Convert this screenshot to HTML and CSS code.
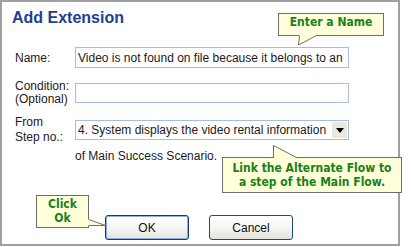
FILE: index.html
```html
<!DOCTYPE html>
<html lang="en">
<head>
    <meta charset="UTF-8">
    <title>Add Extension</title>
    <link rel="stylesheet" href="styles.css">
</head>
<body>
<div class="screen">

    <!-- Dialog -->
    <div class="dialog">
        <h1 class="title">Add Extension</h1>

        <div class="row row-name">
            <label class="label" for="name">Name:</label>
            <input class="field field-name" type="text" id="name" value="Video is not found on file because it belongs to an">
        </div>

        <div class="row row-cond">
            <label class="label label-cond" for="condition">Condition:<br>(Optional)</label>
            <input class="field field-cond" type="text" id="condition">
        </div>

        <div class="row row-step">
            <label class="label label-step">From<br>Step no.:</label>
            <div class="select">
                <span class="select-text">4. System displays the video rental information</span>
                <span class="select-btn"><span class="arrow"></span></span>
            </div>
        </div>

        <p class="note">of Main Success Scenario.</p>

        <div class="buttons">
            <button class="btn btn-default">OK</button>
            <button class="btn">Cancel</button>
        </div>
    </div>

    <!-- Callouts -->
    <div class="callout callout-name">Enter a Name</div>
    <div class="callout callout-flow">Link the Alternate Flow to<br>a step of the Main Flow.</div>
    <div class="callout callout-ok">Click<br>Ok</div>

    <svg class="tails" width="413" height="247" viewBox="0 0 413 247">
        <polygon points="299,35 317,35 298,45.5" fill="#ffffd9"/>
        <polyline points="299.5,35.5 298.5,45 316.5,35.5" fill="none" stroke="#6e6e6e"/>
        <polygon points="274,158 273,145 297,158" fill="#ffffd9"/>
        <polyline points="273.5,157.5 273.5,145.5 296.5,157.5" fill="none" stroke="#6e6e6e"/>
        <polygon points="88,219 106,225.5 88,226" fill="#ffffd9"/>
        <polyline points="88.5,219.5 105.5,225.5 88.5,225.5" fill="none" stroke="#6e6e6e"/>
    </svg>
</div>
</body>
</html>
```

FILE: styles.css
```css
body {
    margin: 0;
    font-family: "Liberation Sans", Arial, sans-serif;
    font-size: 12px;
    color: #1a1a1a;
    background: #fff;
}

.screen {
    position: relative;
    width: 413px;
    height: 247px;
}

.dialog {
    width: 400px;
    height: 246px;
    box-sizing: border-box;
    border: 2px solid #a0a0a0;
    padding: 6px 15px 0 13px;
}

.title {
    margin: 0 0 0 -3px;
    font-size: 16px;
    line-height: 20px;
    font-weight: bold;
    color: #1d3d96;
}

.row {
    display: flex;
    align-items: center;
}

.label {
    flex: none;
    width: 60px;
    line-height: 14px;
}

.label-cond {
    line-height: 13px;
}

.label-step {
    line-height: 15px;
}

.row-name {
    margin-top: 19px;
}

.row-cond {
    margin-top: 12px;
}

.row-step {
    margin-top: 9px;
}

.field {
    width: 274px;
    box-sizing: border-box;
    margin: 0;
    padding: 0 2px;
    border: 1px solid #a7bdd9;
    border-radius: 0;
    font-family: "Liberation Sans", Arial, sans-serif;
    font-size: 12px;
    color: #1a1a1a;
    outline: none;
}

.field-name {
    height: 21px;
}

.field-cond {
    height: 20px;
}

.select {
    display: flex;
    align-items: center;
    width: 274px;
    height: 20px;
    box-sizing: border-box;
    border: 1px solid #a7bdd9;
    padding-left: 2px;
}

.select-text {
    flex: 1;
    white-space: nowrap;
    overflow: hidden;
}

.select-btn {
    display: flex;
    align-items: center;
    justify-content: center;
    width: 15px;
    height: 16px;
    margin-right: 1px;
    background: #ebe9de;
}

.arrow {
    border-left: 4px solid transparent;
    border-right: 4px solid transparent;
    border-top: 5px solid #000;
}

.note {
    margin: 4px 0 0 60px;
    line-height: 15px;
}

.buttons {
    display: flex;
    justify-content: center;
    gap: 20px;
    margin-top: 51px;
}

.btn {
    width: 84px;
    height: 25px;
    border: 1px solid #1d4a80;
    border-radius: 3px;
    background: linear-gradient(#ffffff, #f5f5f1 55%, #e4e3dc);
    font-family: "Liberation Sans", Arial, sans-serif;
    font-size: 12px;
    color: #111;
    padding: 0;
}

.btn-default {
    border-color: #0f3c7c;
    box-shadow: inset 0 0 0 1px #8fb1e2;
}

/* Callouts */
.callout {
    position: absolute;
    box-sizing: border-box;
    background: #ffffd9;
    border: 1px solid #6e6e6e;
    color: #19801b;
    font-family: "DejaVu Sans Condensed", "DejaVu Sans", sans-serif;
    font-weight: bold;
    font-size: 12px;
    line-height: 14px;
    text-align: center;
}

.callout-name {
    left: 278px;
    top: 13px;
    width: 106px;
    height: 23px;
    padding-top: 1px;
}

.callout-flow {
    left: 222px;
    top: 157px;
    width: 180px;
    height: 36px;
    padding-top: 3px;
}

.callout-ok {
    left: 36px;
    top: 195px;
    width: 53px;
    height: 33px;
    padding-top: 1px;
}

.tails {
    position: absolute;
    left: 0;
    top: 0;
    pointer-events: none;
}
```
